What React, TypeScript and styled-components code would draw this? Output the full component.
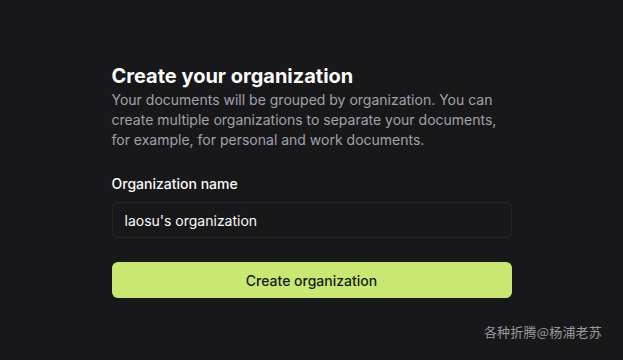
import React from 'react';
import styled, { createGlobalStyle } from 'styled-components';

const GlobalStyle = createGlobalStyle`
  html, body {
    margin: 0;
    padding: 0;
    background: #18181b;
    font-family: Inter, 'Noto Sans', sans-serif;
  }
`;

const Page = styled.div`
  position: relative;
  width: 623px;
  height: 360px;
  background: #18181b;
  display: flex;
  justify-content: center;
  padding-top: 62px;
  box-sizing: border-box;
`;

const Form = styled.form`
  width: 400px;
  display: flex;
  flex-direction: column;
`;

const Title = styled.h1`
  margin: 0;
  font-size: 20px;
  line-height: 28px;
  font-weight: 700;
  color: #fafafa;
`;

const Description = styled.p`
  margin: 0;
  font-size: 14px;
  line-height: 20px;
  color: #a1a1aa;
`;

const Label = styled.label`
  margin-top: 24px;
  font-size: 14px;
  line-height: 20px;
  font-weight: 500;
  color: #fafafa;
`;

const Input = styled.input`
  margin-top: 8px;
  height: 36px;
  box-sizing: border-box;
  padding: 0 12px;
  border: 1px solid #27272a;
  border-radius: 6px;
  background: transparent;
  color: #fafafa;
  font-family: inherit;
  font-size: 14px;
  outline: none;
`;

const Button = styled.button`
  margin-top: 24px;
  height: 36px;
  border: none;
  border-radius: 6px;
  background: #c8e872;
  color: #18181b;
  font-family: inherit;
  font-size: 14px;
  font-weight: 500;
  cursor: pointer;
`;

const Watermark = styled.div`
  position: absolute;
  right: 21px;
  bottom: 19px;
  font-size: 13px;
  letter-spacing: 0.2px;
  color: #9a9a9e;
  font-family: 'Noto Sans CJK SC', sans-serif;
`;

export default function App() {
  return (
    <>
      <GlobalStyle />
      <Page>
        <Form onSubmit={(e) => e.preventDefault()}>
          <Title>Create your organization</Title>
          <Description>
            Your documents will be grouped by organization. You can create multiple
            organizations to separate your documents, for example, for personal and
            work documents.
          </Description>
          <Label htmlFor="org">Organization name</Label>
          <Input id="org" defaultValue="laosu's organization" />
          <Button type="submit">Create organization</Button>
        </Form>
        <Watermark>各种折腾@杨浦老苏</Watermark>
      </Page>
    </>
  );
}
